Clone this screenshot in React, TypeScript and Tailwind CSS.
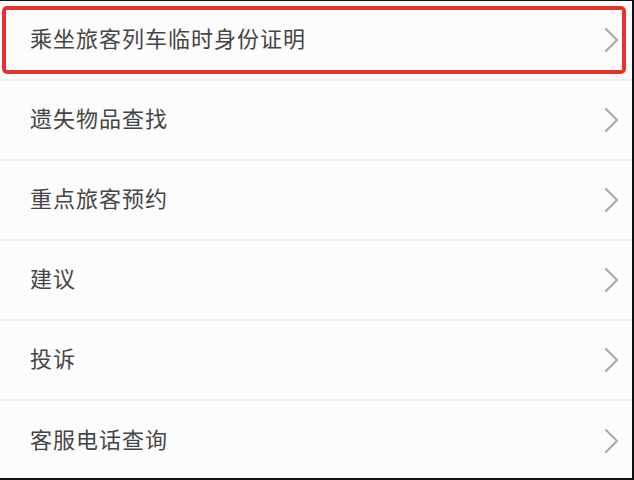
const items = [
  "乘坐旅客列车临时身份证明",
  "遗失物品查找",
  "重点旅客预约",
  "建议",
  "投诉",
  "客服电话查询",
];

function Chevron() {
  return (
    <svg width="16" height="26" viewBox="0 0 16 26" fill="none" className="shrink-0">
      <path d="M2 2 L13 13 L2 24" stroke="#a9a9a9" strokeWidth="2" strokeLinecap="round" strokeLinejoin="round" />
    </svg>
  );
}

export default function App() {
  return (
    <div
      className="w-[634px] h-[480px] overflow-hidden bg-[#fcfcfc] border-t border-r-2 border-b-2 border-[#111]"
      style={{ fontFamily: '"Noto Sans CJK SC", "Noto Sans", sans-serif' }}
    >
      <div className="flex flex-col">
        {items.map((label, i) => (
          <div
            key={label}
            className={`relative h-[80px] flex items-center pl-[30px] pr-[12px] ${
              i < items.length - 1 ? "border-b-2 border-[#efefef]" : ""
            }`}
          >
            {i === 0 && (
              <div className="absolute left-[2px] right-[6px] top-[5px] bottom-[5px] border-4 border-[#e5322d] rounded-[5px]" />
            )}
            <span className="flex-1 mb-[5px] text-[22px] text-[#454545] tracking-[1px]">{label}</span>
            <Chevron />
          </div>
        ))}
      </div>
    </div>
  );
}
